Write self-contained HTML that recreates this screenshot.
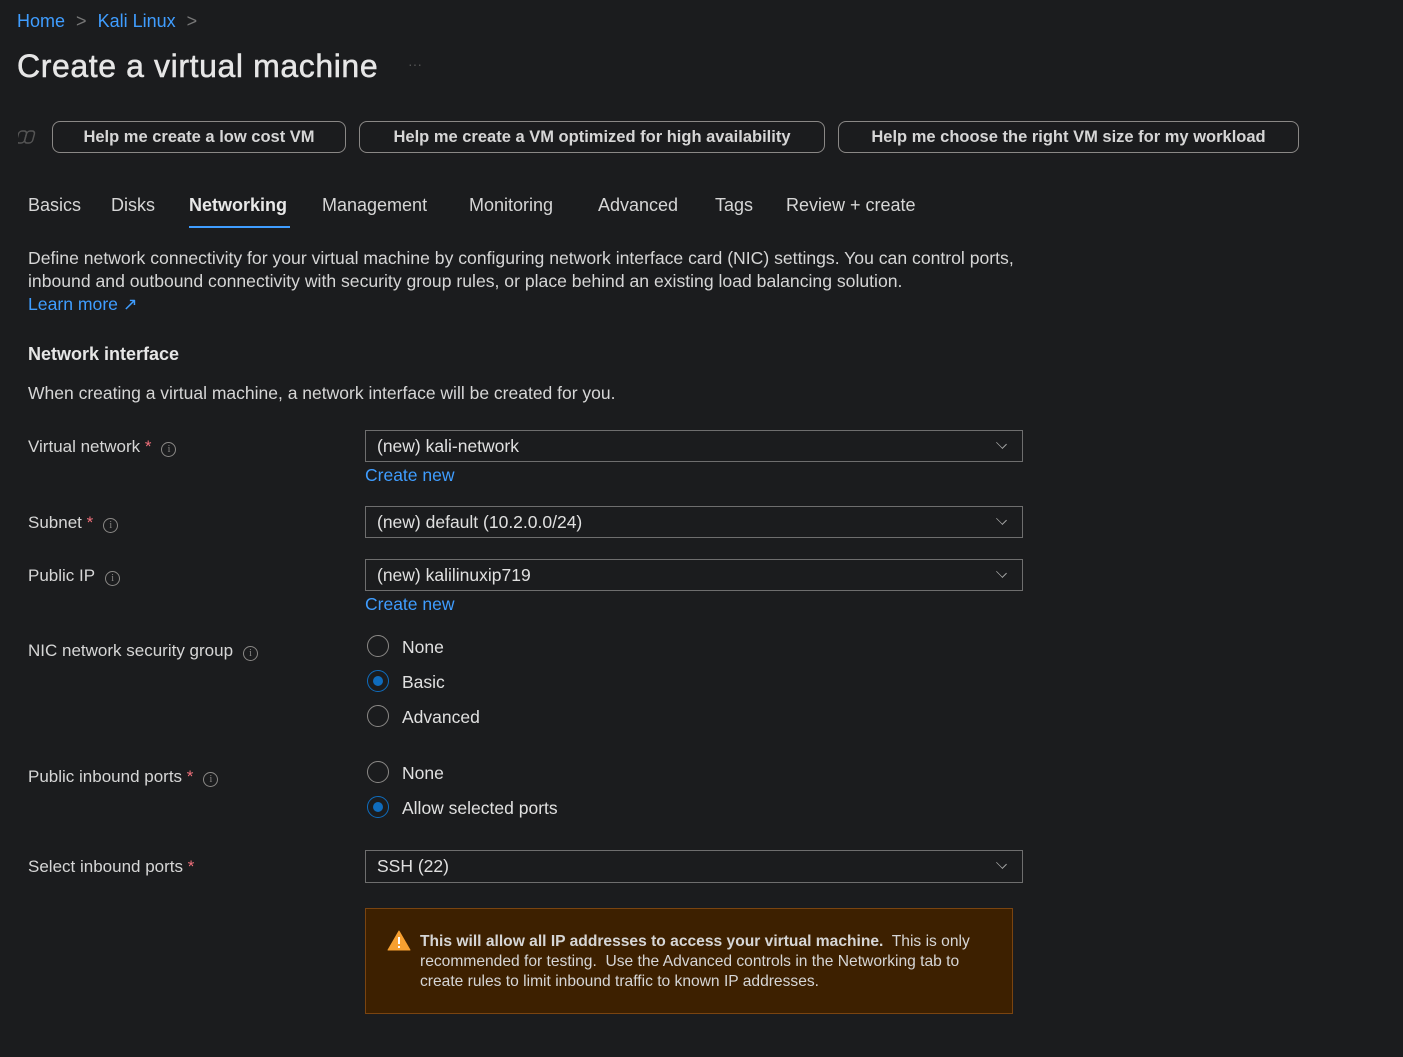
<!DOCTYPE html>
<html><head><style>
body{margin:0;background:#1b1c1e;width:1403px;height:1057px;overflow:hidden;font-family:"Liberation Sans",sans-serif;color:#d6d6d6;position:relative}
.a{position:absolute;white-space:nowrap}
.link{color:#3f9dff}
.btn{position:absolute;top:121px;height:32px;border:1px solid #8a8886;border-radius:8px;box-sizing:border-box;font-size:16.5px;font-weight:bold;line-height:30px;text-align:center;color:#d6d6d6}
.tab{position:absolute;top:195px;font-size:18px}
.lbl{position:absolute;left:28px;font-size:17px}
.star{color:#f1707b}
.info{display:inline-block;width:13px;height:13px;border:1px solid #8a8886;border-radius:50%;margin-left:10px;vertical-align:0px;font-size:10px;line-height:13px;text-align:center;color:#8a8886;font-family:"Liberation Serif",serif}
.dd{position:absolute;left:365px;width:658px;height:32px;border:1px solid #6e6e6e;box-sizing:border-box;font-size:17.5px;line-height:30px;padding-left:11px;color:#e0e0e0}
.dd:after{content:"";position:absolute;right:16px;top:8px;width:8px;height:8px;border-right:1px solid #aaa;border-bottom:1px solid #aaa;transform:rotate(45deg) scaleY(.7)}
.rad{position:absolute;left:367px;width:22px;height:22px;border:1px solid #8a8886;border-radius:50%;box-sizing:border-box}
.rad.on{border-color:#0f6cbd}
.rad.on:after{content:"";position:absolute;left:5px;top:5px;width:10px;height:10px;border-radius:50%;background:#0f6cbd}
.rt{position:absolute;left:402px;font-size:17.5px;color:#e0e0e0}
</style></head><body>
<div class="a" style="left:17px;top:11px;font-size:18px"><span class="link">Home</span> <span style="color:#777;margin:0 6px">&gt;</span> <span class="link">Kali Linux</span> <span style="color:#777;margin-left:6px">&gt;</span></div>
<div class="a" style="left:17px;top:48px;font-size:32px;letter-spacing:0.6px;color:#e6e6e6;-webkit-text-stroke:0.5px #e6e6e6">Create a virtual machine</div>
<div class="a" style="left:408px;top:56px;font-size:14px;color:#555">···</div>
<svg class="a" style="left:18px;top:128px" width="20" height="18"><rect x="2" y="3" width="8" height="12" rx="3" fill="none" stroke="#555" stroke-width="1.5" transform="skewX(-15)"/><rect x="10" y="3" width="8" height="12" rx="3" fill="none" stroke="#555" stroke-width="1.5" transform="skewX(-15)"/></svg>
<div class="btn" style="left:52px;width:294px">Help me create a low cost VM</div>
<div class="btn" style="left:359px;width:466px">Help me create a VM optimized for high availability</div>
<div class="btn" style="left:838px;width:461px">Help me choose the right VM size for my workload</div>
<div class="tab" style="left:28px">Basics</div>
<div class="tab" style="left:111px">Disks</div>
<div class="tab" style="left:189px;font-weight:bold;color:#e8e8e8">Networking</div>
<div class="a" style="left:189px;top:226px;width:101px;height:2px;background:#3f9dff"></div>
<div class="tab" style="left:322px">Management</div>
<div class="tab" style="left:469px">Monitoring</div>
<div class="tab" style="left:598px">Advanced</div>
<div class="tab" style="left:715px">Tags</div>
<div class="tab" style="left:786px">Review + create</div>
<div class="a" style="left:28px;top:247px;font-size:17.6px;line-height:23px">Define network connectivity for your virtual machine by configuring network interface card (NIC) settings. You can control ports,<br>inbound and outbound connectivity with security group rules, or place behind an existing load balancing solution.<br><span class="link">Learn more ↗</span></div>
<div class="a" style="left:28px;top:344px;font-size:18px;font-weight:bold;color:#e6e6e6">Network interface</div>
<div class="a" style="left:28px;top:383px;font-size:17.5px">When creating a virtual machine, a network interface will be created for you.</div>
<div class="lbl" style="top:437px">Virtual network <span class="star">*</span><span class="info">i</span></div>
<div class="dd" style="top:430px">(new) kali-network</div>
<div class="a link" style="left:365px;top:465px;font-size:17.5px">Create new</div>
<div class="lbl" style="top:513px">Subnet <span class="star">*</span><span class="info">i</span></div>
<div class="dd" style="top:506px">(new) default (10.2.0.0/24)</div>
<div class="lbl" style="top:566px">Public IP<span class="info">i</span></div>
<div class="dd" style="top:559px">(new) kalilinuxip719</div>
<div class="a link" style="left:365px;top:594px;font-size:17.5px">Create new</div>
<div class="lbl" style="top:641px">NIC network security group<span class="info">i</span></div>
<div class="rad" style="top:635px"></div><div class="rt" style="top:637px">None</div>
<div class="rad on" style="top:670px"></div><div class="rt" style="top:672px">Basic</div>
<div class="rad" style="top:705px"></div><div class="rt" style="top:707px">Advanced</div>
<div class="lbl" style="top:767px">Public inbound ports <span class="star">*</span><span class="info">i</span></div>
<div class="rad" style="top:761px"></div><div class="rt" style="top:763px">None</div>
<div class="rad on" style="top:796px"></div><div class="rt" style="top:798px">Allow selected ports</div>
<div class="lbl" style="top:857px">Select inbound ports <span class="star">*</span></div>
<div class="dd" style="top:850px;height:33px">SSH (22)</div>
<div class="a" style="left:365px;top:908px;width:648px;height:106px;background:#3d2000;border:1px solid #7a4410;box-sizing:border-box"></div>
<svg class="a" style="left:387px;top:930px" width="24" height="21"><path d="M12 1 L23 20 H1 Z" fill="#f7a030" stroke="#f7a030" stroke-linejoin="round"/><rect x="11" y="7" width="2" height="7" fill="#fff"/><rect x="11" y="16" width="2" height="2" fill="#fff"/></svg>
<div class="a" style="left:420px;top:932px;font-size:15.6px;line-height:20px;color:#d6d6d6"><b>This will allow all IP addresses to access your virtual machine.</b>&nbsp; This is only<br>recommended for testing.&nbsp; Use the Advanced controls in the Networking tab to<br>create rules to limit inbound traffic to known IP addresses.</div>
</body></html>
